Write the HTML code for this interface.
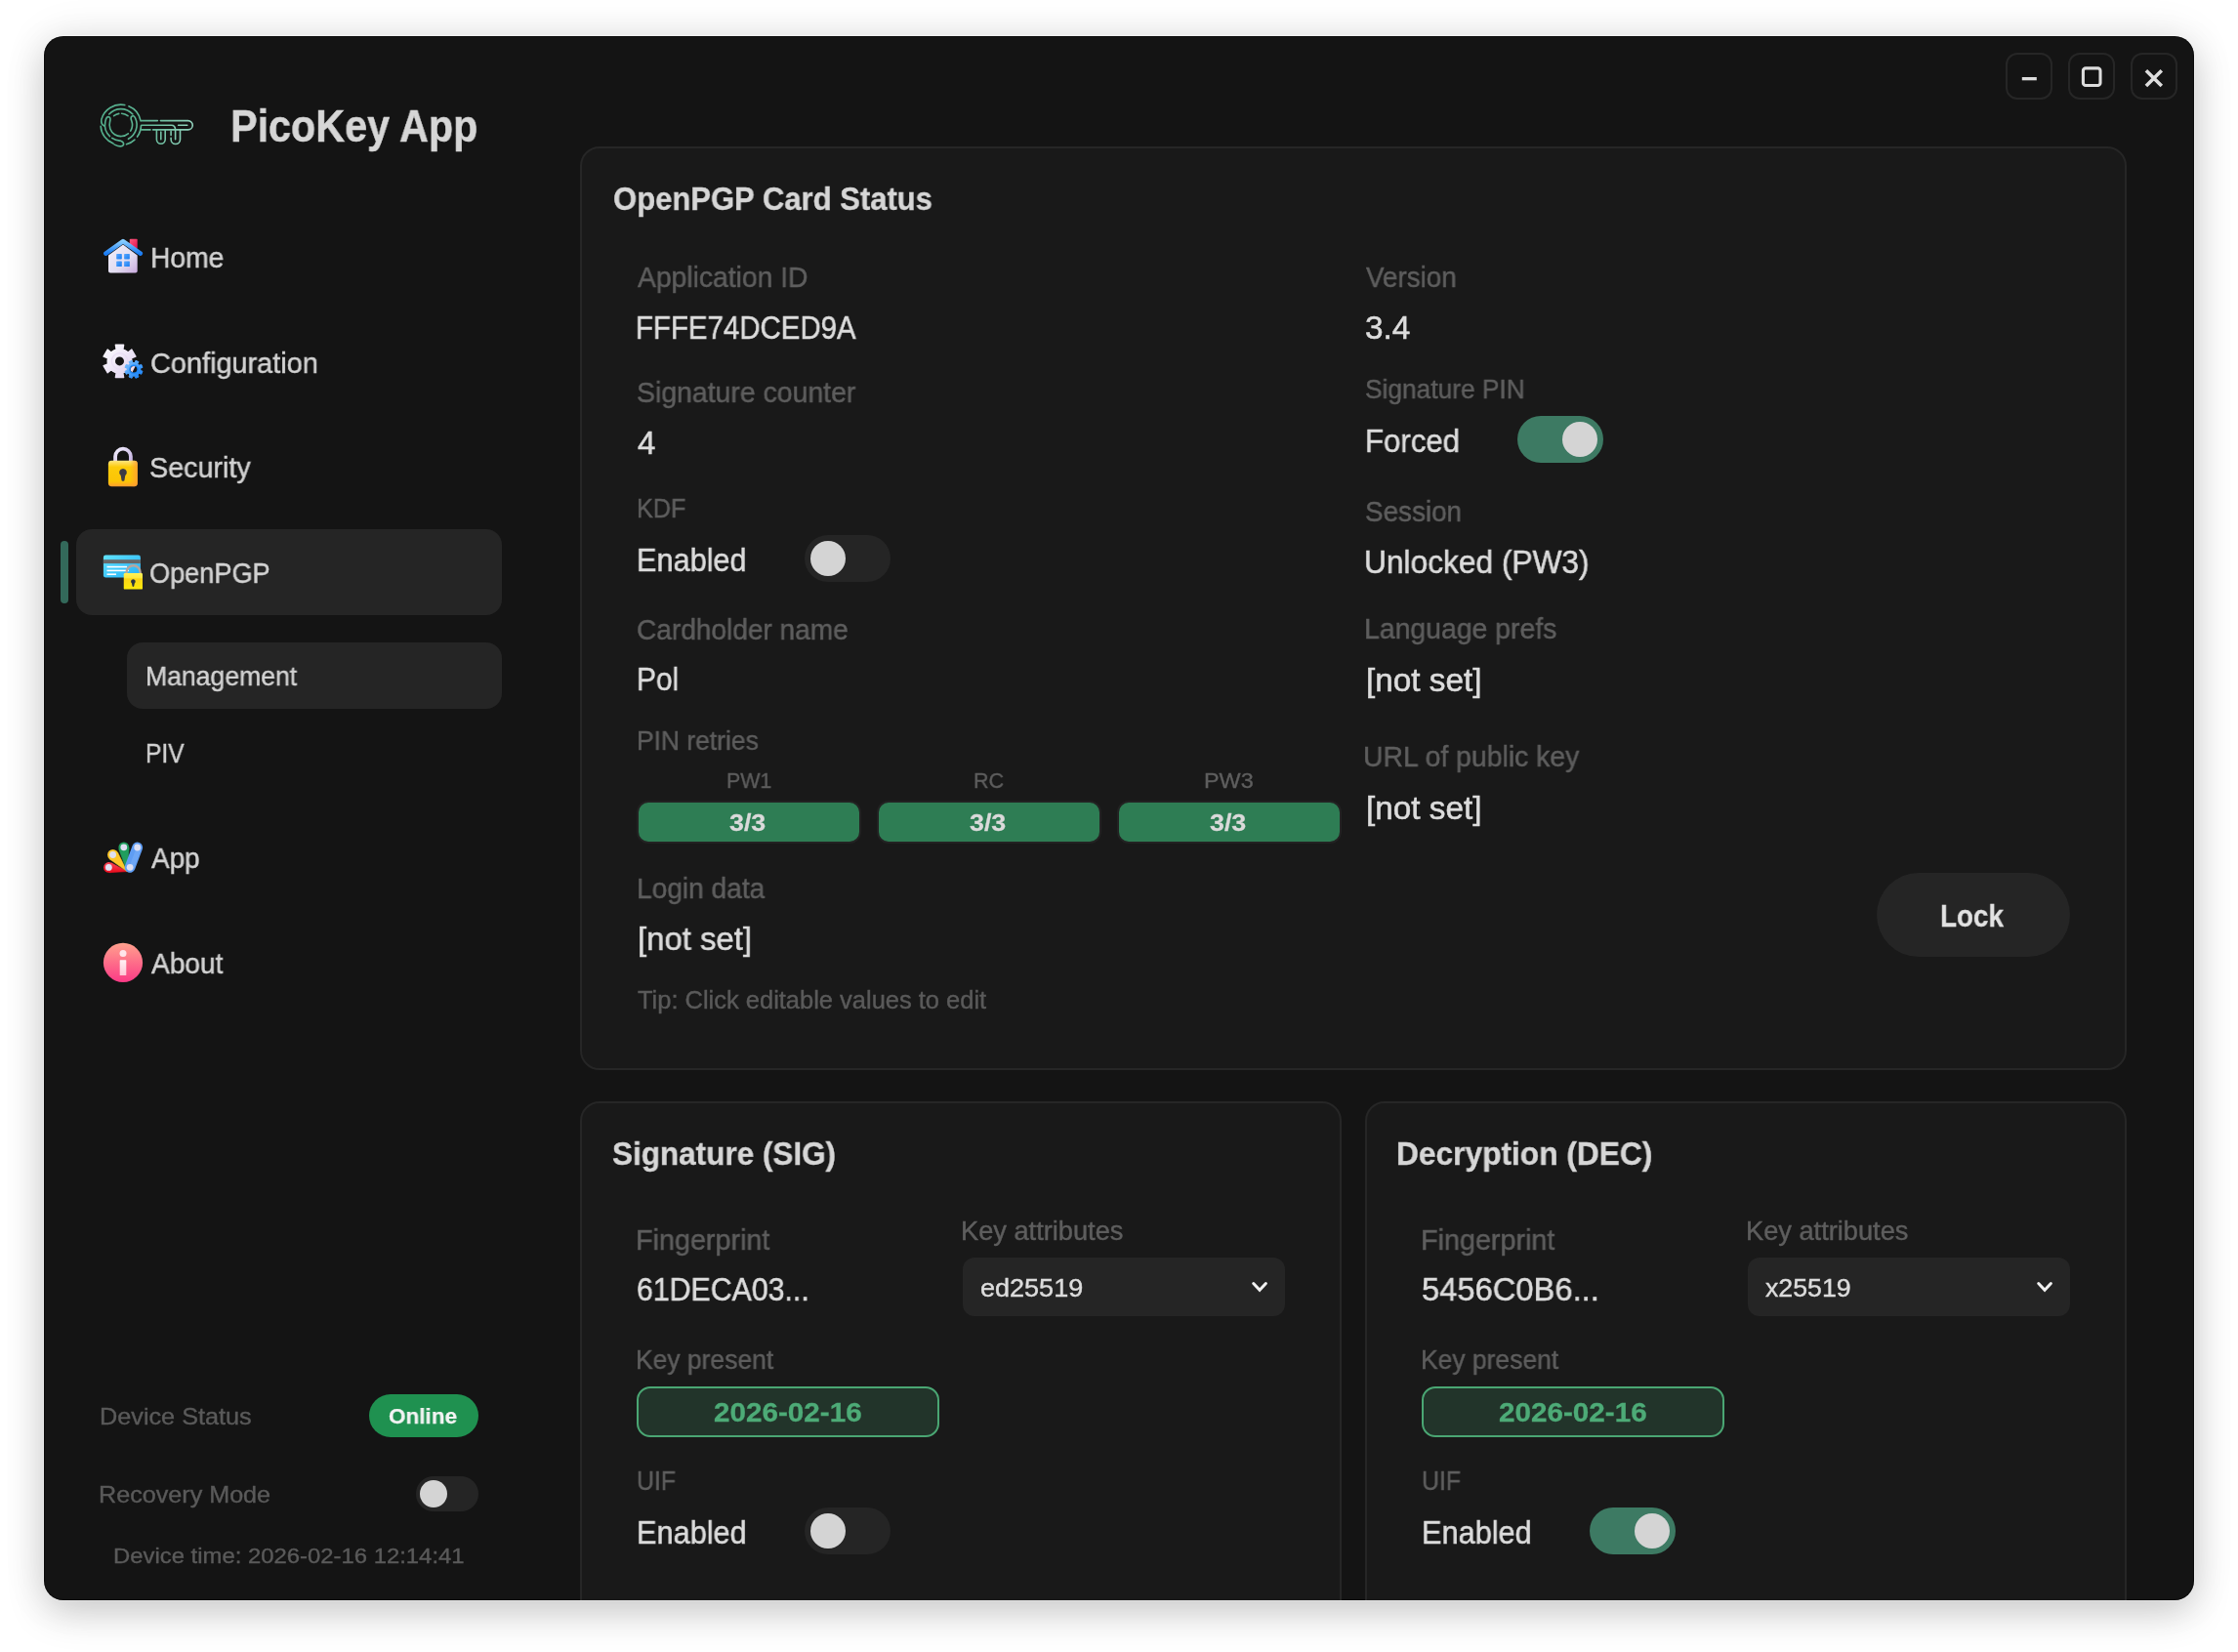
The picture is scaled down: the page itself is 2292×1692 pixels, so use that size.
<!DOCTYPE html>
<html><head><meta charset="utf-8"><title>PicoKey App</title>
<style>
html,body{margin:0;padding:0;}
body{width:2292px;height:1692px;background:#ffffff;overflow:hidden;position:relative;font-family:"Liberation Sans",sans-serif;}
#win{position:absolute;left:45px;top:37px;width:2202px;height:1602px;border-radius:20px;background:#141414;overflow:hidden;box-shadow:inset 0 0 0 1px rgba(0,0,0,0.4);}
#shadow{position:absolute;left:45px;top:37px;width:2202px;height:1602px;border-radius:20px;box-shadow:0 0 0 1px rgba(255,255,255,0.28),0 14px 38px rgba(0,0,0,0.17),0 0 46px rgba(0,0,0,0.09);}
.b{position:absolute;}
.t{position:absolute;white-space:pre;transform-origin:0 50%;will-change:transform;}
#icons{position:absolute;left:0;top:0;width:2202px;height:1602px;}
</style></head>
<body>
<div id="shadow"></div>
<div id="win">
<div class="b" style="left:17.00px;top:517.00px;width:8.00px;height:64.00px;background:#33695a;border-radius:4px;"></div>
<div class="b" style="left:33.00px;top:505.00px;width:435.50px;height:88.00px;background:#252525;border-radius:16px;"></div>
<div class="b" style="left:85.00px;top:621.00px;width:383.50px;height:68.00px;background:#252525;border-radius:16px;"></div>
<div class="b" style="left:333.00px;top:1391.00px;width:112.00px;height:44.00px;background:#1f9150;border-radius:22px;"></div>
<div class="b" style="left:381.00px;top:1475.00px;width:64.00px;height:36.00px;background:#252525;border-radius:18.0px;"><div class="b" style="left:4.00px;top:4.00px;width:28px;height:28px;border-radius:50%;background:#d4d4d4;"></div></div>
<div class="b" style="left:2009.00px;top:17.00px;width:48.00px;height:48.00px;border:2px solid #262626;border-radius:12px;box-sizing:border-box;"></div>
<div class="b" style="left:2073.00px;top:17.00px;width:48.00px;height:48.00px;border:2px solid #262626;border-radius:12px;box-sizing:border-box;"></div>
<div class="b" style="left:2137.00px;top:17.00px;width:48.00px;height:48.00px;border:2px solid #262626;border-radius:12px;box-sizing:border-box;"></div>
<div class="b" style="left:549.00px;top:113.00px;width:1584.00px;height:946.00px;background:#191919;border:2px solid #262626;border-radius:20px;box-sizing:border-box;"></div>
<div class="b" style="left:549.00px;top:1091.00px;width:780.00px;height:700.00px;background:#191919;border:2px solid #262626;border-radius:20px;box-sizing:border-box;"></div>
<div class="b" style="left:1353.00px;top:1091.00px;width:780.00px;height:700.00px;background:#191919;border:2px solid #262626;border-radius:20px;box-sizing:border-box;"></div>
<div class="b" style="left:779.00px;top:511.00px;width:88.00px;height:48.00px;background:#252525;border-radius:24.0px;"><div class="b" style="left:6.00px;top:6.00px;width:36px;height:36px;border-radius:50%;background:#d4d4d4;"></div></div>
<div class="b" style="left:1509.00px;top:389.00px;width:88.00px;height:48.00px;background:#3d7a63;border-radius:24.0px;"><div class="b" style="left:46.00px;top:6.00px;width:36px;height:36px;border-radius:50%;background:#d4d4d4;"></div></div>
<div class="b" style="left:607.00px;top:783.00px;width:230.00px;height:44.00px;background:#2e7d54;border:2px solid #222222;border-radius:12px;box-sizing:border-box;"></div>
<div class="b" style="left:853.00px;top:783.00px;width:230.00px;height:44.00px;background:#2e7d54;border:2px solid #222222;border-radius:12px;box-sizing:border-box;"></div>
<div class="b" style="left:1099.00px;top:783.00px;width:230.00px;height:44.00px;background:#2e7d54;border:2px solid #222222;border-radius:12px;box-sizing:border-box;"></div>
<div class="b" style="left:1877.00px;top:857.00px;width:198.00px;height:86.00px;background:#252525;border-radius:43px;"></div>
<div class="b" style="left:941.00px;top:1251.00px;width:330.00px;height:60.00px;background:#252525;border-radius:12px;"></div>
<div class="b" style="left:607.00px;top:1383.00px;width:310.00px;height:52.00px;background:#22342a;border:2px solid #4aa673;border-radius:14px;box-sizing:border-box;"></div>
<div class="b" style="left:779.00px;top:1507.00px;width:88.00px;height:48.00px;background:#252525;border-radius:24.0px;"><div class="b" style="left:6.00px;top:6.00px;width:36px;height:36px;border-radius:50%;background:#d4d4d4;"></div></div>
<div class="b" style="left:1745.00px;top:1251.00px;width:330.00px;height:60.00px;background:#252525;border-radius:12px;"></div>
<div class="b" style="left:1411.00px;top:1383.00px;width:310.00px;height:52.00px;background:#22342a;border:2px solid #4aa673;border-radius:14px;box-sizing:border-box;"></div>
<div class="b" style="left:1583.00px;top:1507.00px;width:88.00px;height:48.00px;background:#3d7a63;border-radius:24.0px;"><div class="b" style="left:46.00px;top:6.00px;width:36px;height:36px;border-radius:50%;background:#d4d4d4;"></div></div>
<svg id="icons" viewBox="45 37 2202 1602">
<defs>
<linearGradient id="gLogo" gradientUnits="userSpaceOnUse" x1="102" y1="0" x2="198" y2="0"><stop offset="0" stop-color="#52ad8a"/><stop offset="0.45" stop-color="#5db493"/><stop offset="1" stop-color="#94d5bf"/></linearGradient>
<linearGradient id="gRoof" x1="0" y1="0" x2="0" y2="1"><stop offset="0" stop-color="#86ccff"/><stop offset="1" stop-color="#1b7cf2"/></linearGradient>
<linearGradient id="gWall" x1="0" y1="0" x2="1" y2="1"><stop offset="0" stop-color="#f2f0fb"/><stop offset="0.6" stop-color="#e2dcf0"/><stop offset="1" stop-color="#c9a9dd"/></linearGradient>
<linearGradient id="gChim" x1="0" y1="0" x2="1" y2="1"><stop offset="0" stop-color="#ff5a7e"/><stop offset="1" stop-color="#e0104e"/></linearGradient>
<linearGradient id="gWin" x1="0" y1="0" x2="1" y2="1"><stop offset="0" stop-color="#5aa8ff"/><stop offset="1" stop-color="#167bf0"/></linearGradient>
<linearGradient id="gGear" x1="0" y1="0" x2="1" y2="1"><stop offset="0" stop-color="#fbfaff"/><stop offset="1" stop-color="#e0d2ee"/></linearGradient>
<linearGradient id="gGearB" x1="0" y1="0" x2="1" y2="1"><stop offset="0" stop-color="#7cc0ff"/><stop offset="1" stop-color="#1680f6"/></linearGradient>
<linearGradient id="gLock" x1="0" y1="0" x2="0" y2="1"><stop offset="0" stop-color="#ffe680"/><stop offset="0.25" stop-color="#fccb0a"/><stop offset="0.8" stop-color="#fbc506"/><stop offset="1" stop-color="#ff9d30"/></linearGradient>
<linearGradient id="gLockR" x1="0" y1="0" x2="1" y2="0"><stop offset="0.75" stop-color="#ff9d30" stop-opacity="0"/><stop offset="1" stop-color="#ff9d30" stop-opacity="0.9"/></linearGradient>
<linearGradient id="gShack" x1="0" y1="0" x2="1" y2="1"><stop offset="0" stop-color="#f0ecfb"/><stop offset="1" stop-color="#c4b0e2"/></linearGradient>
<linearGradient id="gCard" x1="0" y1="0" x2="1" y2="1"><stop offset="0" stop-color="#62e4ff"/><stop offset="1" stop-color="#22aef6"/></linearGradient>
<linearGradient id="gLock2" x1="0" y1="0" x2="0" y2="1"><stop offset="0" stop-color="#fff25a"/><stop offset="0.3" stop-color="#fde83c"/><stop offset="0.35" stop-color="#fbd417"/><stop offset="1" stop-color="#fdea0a"/></linearGradient>
<linearGradient id="gAbout" x1="0" y1="0" x2="0" y2="1"><stop offset="0" stop-color="#ffa18d"/><stop offset="1" stop-color="#fc3a86"/></linearGradient>
<linearGradient id="gAboutI" x1="0" y1="0" x2="0" y2="1"><stop offset="0" stop-color="#fff2f5"/><stop offset="1" stop-color="#ffc6d6"/></linearGradient>
<linearGradient id="gRed" x1="0" y1="0" x2="0" y2="1"><stop offset="0" stop-color="#fa4556"/><stop offset="1" stop-color="#ea0b1c"/></linearGradient>
</defs>
<path d="M103.90 122.19A20.7 20.7 0 0 1 127.75 107.58M131.89 108.85A20.7 20.7 0 0 1 144.12 123.95M144.49 128.62A20.7 20.7 0 0 1 140.55 140.07M137.92 143.04A20.7 20.7 0 0 1 129.51 147.80M116.05 147.09A20.7 20.7 0 0 1 103.15 129.34M117.30 148.10 Q124.30 151.50 126.40 148.50 Q127.40 145.90 123.60 144.20M111.69 116.99A16.3 16.3 0 0 1 135.91 116.99M138.57 121.01A16.3 16.3 0 0 1 131.45 142.29M122.66 144.16A16.3 16.3 0 0 1 114.69 141.41M112.48 139.63A16.3 16.3 0 0 1 107.86 124.51M103.90 122.20 Q103.00 127.40 106.80 129.10M107.90 124.50 Q108.80 118.60 112.00 119.90 Q113.60 120.90 112.60 124.70M131.32 136.86A11.7 11.7 0 0 1 112.55 124.68M134.93 124.28A11.7 11.7 0 0 1 133.72 134.10M116.60 118.68A11.7 11.7 0 0 1 121.77 116.38M124.62 116.23A11.7 11.7 0 0 1 131.00 118.68M138.60 121.00 Q136.80 117.50 134.70 119.30 Q133.40 120.90 134.90 124.30M145.2 123.6H161.4M164.4 123.6H192.6A4.65 4.65 0 0 1 192.6 132.9H156.6M145.2 132.9H154M145.2 128.25H175.4Q179.6 128.25 179.6 133.3V142.7M182.6 128.25H191.8M160.4 132.9V142.8A4.4 4.4 0 0 0 169.2 142.8V132.9M164.8 135V142.7M175.1 134.6V138.4M175.1 141.2V142.8A4.7 4.7 0 0 0 184.5 142.8V132.9" fill="none" stroke="url(#gLogo)" stroke-width="1.6" stroke-linecap="round" stroke-linejoin="round"/>
<g><rect x="132.8" y="244.8" width="7.9" height="10" rx="0.8" fill="url(#gChim)"/><path d="M111 261.5L126 250.6L140.7 261.5V277.6Q140.7 279.6 138.7 279.6H113Q111 279.6 111 277.6Z" fill="url(#gWall)"/><path d="M108.4 259.6L126 247.2L143.8 259.6" fill="none" stroke="url(#gRoof)" stroke-width="4.6" stroke-linecap="round" stroke-linejoin="round"/><rect x="119.2" y="260" width="5.6" height="5.4" rx="0.6" fill="url(#gWin)"/><rect x="127.1" y="260" width="5.7" height="5.4" rx="0.6" fill="url(#gWin)"/><rect x="119.2" y="267.6" width="5.6" height="5.4" rx="0.6" fill="url(#gWin)"/><rect x="127.1" y="267.6" width="5.7" height="5.4" rx="0.6" fill="url(#gWin)"/></g>
<path d="M119.19 357.95L118.38 353.30L126.62 353.30L125.81 357.95L131.19 361.06L134.81 358.03L138.93 365.17L134.51 366.80L134.51 373.00L138.93 374.63L134.81 381.77L131.19 378.74L125.81 381.85L126.62 386.50L118.38 386.50L119.19 381.85L113.81 378.74L110.19 381.77L106.07 374.63L110.49 373.00L110.49 366.80L106.07 365.17L110.19 358.03L113.81 361.06Z" fill="url(#gGear)" stroke="url(#gGear)" stroke-width="1.4" stroke-linejoin="round"/>
<circle cx="122.5" cy="369.9" r="12.9" fill="url(#gGear)"/>
<circle cx="122.5" cy="369.9" r="8.2" fill="none" stroke="#e6daf2" stroke-width="1.2" opacity="0.8"/>
<circle cx="122.5" cy="369.9" r="4.5" fill="#141414"/>
<path d="M138.14 371.49L138.93 369.30L142.00 370.58L141.01 372.68L142.62 374.29L144.72 373.30L146.00 376.37L143.81 377.16L143.81 379.44L146.00 380.23L144.72 383.30L142.62 382.31L141.01 383.92L142.00 386.02L138.93 387.30L138.14 385.11L135.86 385.11L135.07 387.30L132.00 386.02L132.99 383.92L131.38 382.31L129.28 383.30L128.00 380.23L130.19 379.44L130.19 377.16L128.00 376.37L129.28 373.30L131.38 374.29L132.99 372.68L132.00 370.58L135.07 369.30L135.86 371.49Z" fill="url(#gGearB)" stroke="url(#gGearB)" stroke-width="1" stroke-linejoin="round"/>
<circle cx="137.0" cy="378.3" r="6.9" fill="url(#gGearB)"/>
<circle cx="137.0" cy="378.3" r="4.8" fill="#1d88f8"/>
<circle cx="137.0" cy="378.3" r="3.3" fill="#141414"/>
<path d="M133.7 378.3A3.3 3.3 0 0 1 138.50 375.36L135.50 381.24A3.3 3.3 0 0 1 133.7 378.3Z" fill="#f2dcec"/>
<path d="M118.1 474V467.6A7.9 7.9 0 0 1 133.9 467.6V474" fill="none" stroke="url(#gShack)" stroke-width="3.8"/><rect x="110.9" y="471.8" width="29.9" height="26.4" rx="3.4" fill="url(#gLock)"/><rect x="110.9" y="471.8" width="29.9" height="26.4" rx="3.4" fill="url(#gLockR)"/><path d="M126 479.9A3.9 3.9 0 0 1 128.3 486.9L127.4 492.2Q126 493.4 124.6 492.2L123.7 486.9A3.9 3.9 0 0 1 126 479.9Z" fill="#3b3b44"/>
<rect x="105.9" y="568.5" width="38" height="23.1" rx="2.4" fill="url(#gCard)"/><rect x="105.9" y="573.2" width="38" height="3.9" fill="#686868"/><rect x="109.5" y="579.8" width="20.6" height="1.6" fill="#fff"/><rect x="109.5" y="583.6" width="22.4" height="1.6" fill="#fff"/><rect x="109.5" y="587.4" width="9.5" height="1.6" fill="#fff"/><path d="M129.5 588V586.4A7.1 7.1 0 0 1 143.7 586.4V588" fill="none" stroke="#b5a69f" stroke-width="2.4"/><rect x="126.75" y="587" width="19.25" height="16.6" rx="1.2" fill="url(#gLock2)"/><path d="M136.4 593.2A2.4 2.4 0 0 1 137.8 597.5L137.2 600.6Q136.4 601.4 135.6 600.6L135 597.5A2.4 2.4 0 0 1 136.4 593.2Z" fill="#2b3540"/>
<path d="M130.20 892.60L113.93 883.75L111.71 893.69Z" fill="url(#gRed)" stroke="url(#gRed)" stroke-width="0.6" stroke-linejoin="round"/><circle cx="111.4" cy="888.4" r="5.3" fill="url(#gRed)"/>
<path d="M130.20 892.60L120.53 873.06L112.42 879.99Z" fill="#fcc72a" stroke="#fcc72a" stroke-width="0.6" stroke-linejoin="round"/><circle cx="115.6" cy="875.5" r="5.5" fill="#fcc72a"/>
<path d="M130.20 892.60L132.18 868.24L121.73 869.67Z" fill="#219e5e" stroke="#219e5e" stroke-width="0.6" stroke-linejoin="round"/><circle cx="126.8" cy="867.8" r="5.4" fill="#219e5e"/>
<path d="M133.1 888.35L140.7 868" fill="none" stroke="#5f9df4" stroke-width="10.8" stroke-linecap="round"/>
<path d="M134.6 888.9L142.2 868.5" fill="none" stroke="#78adf6" stroke-width="5" stroke-linecap="round" opacity="0.6"/>
<circle cx="111.4" cy="888.4" r="3.4" fill="#dfe0f2"/>
<circle cx="115.6" cy="875.5" r="3.4" fill="#dfe0f2"/>
<circle cx="126.8" cy="867.8" r="3.4" fill="#dfe0f2"/>
<circle cx="140.7" cy="868" r="3.4" fill="#dfe0f2"/>
<circle cx="133.1" cy="888.35" r="3.4" fill="#dfe0f2"/>
<circle cx="126" cy="985.9" r="20.1" fill="url(#gAbout)"/><circle cx="126" cy="976.5" r="3.5" fill="#ffe4ea"/><rect x="122.7" y="983.2" width="6.6" height="15.8" rx="0.6" fill="url(#gAboutI)"/>
<rect x="2070.8" y="79" width="15" height="3.3" fill="#dddddd"/>
<rect x="2133.4" y="69.9" width="17.6" height="17.6" rx="2.6" fill="none" stroke="#dddddd" stroke-width="3.1"/>
<path d="M2197.9 72.2L2213.8 88M2213.8 72.2L2197.9 88" stroke="#dddddd" stroke-width="3.6" fill="none"/>
<path d="M1283.7 1314.5L1290.05 1321.2L1296.4 1314.5" fill="none" stroke="#f2f2f2" stroke-width="3" stroke-linecap="round" stroke-linejoin="miter"/>
<path d="M2087.7 1314.5L2094.05 1321.2L2100.4 1314.5" fill="none" stroke="#f2f2f2" stroke-width="3" stroke-linecap="round" stroke-linejoin="miter"/>
</svg>
<span class="t" id="title" style="left:191.30px;top:64.43px;font-size:46.38px;line-height:56px;color:#d6d6d6;transform:scaleX(0.8908);font-weight:700;-webkit-text-stroke:0.51px currentColor;">PicoKey App</span>
<span class="t" id="home" style="left:108.50px;top:208.67px;font-size:29.54px;line-height:35px;color:#d2d2d2;transform:scaleX(0.9571);-webkit-text-stroke:0.47px currentColor;">Home</span>
<span class="t" id="config" style="left:108.90px;top:317.07px;font-size:29.54px;line-height:35px;color:#d2d2d2;transform:scaleX(0.9783);-webkit-text-stroke:0.47px currentColor;">Configuration</span>
<span class="t" id="security" style="left:108.00px;top:424.66px;font-size:29.12px;line-height:35px;color:#d2d2d2;transform:scaleX(0.9865);-webkit-text-stroke:0.47px currentColor;">Security</span>
<span class="t" id="openpgp" style="left:108.00px;top:532.91px;font-size:29.12px;line-height:35px;color:#d2d2d2;transform:scaleX(0.9315);-webkit-text-stroke:0.47px currentColor;">OpenPGP</span>
<span class="t" id="mgmt" style="left:104.00px;top:640.13px;font-size:27.04px;line-height:32px;color:#d2d2d2;transform:scaleX(0.9832);-webkit-text-stroke:0.43px currentColor;">Management</span>
<span class="t" id="piv" style="left:104.00px;top:719.38px;font-size:27.04px;line-height:32px;color:#d2d2d2;transform:scaleX(0.9095);-webkit-text-stroke:0.43px currentColor;">PIV</span>
<span class="t" id="app" style="left:110.00px;top:824.66px;font-size:29.12px;line-height:35px;color:#d2d2d2;transform:scaleX(0.9577);-webkit-text-stroke:0.47px currentColor;">App</span>
<span class="t" id="about" style="left:110.00px;top:932.91px;font-size:29.12px;line-height:35px;color:#d2d2d2;transform:scaleX(0.9650);-webkit-text-stroke:0.47px currentColor;">About</span>
<span class="t" id="devstatus" style="left:56.80px;top:1399.03px;font-size:24.44px;line-height:29px;color:#5a5a5a;transform:scaleX(1.0328);-webkit-text-stroke:0.39px currentColor;">Device Status</span>
<span class="t" id="online" style="left:353.00px;top:1399.57px;font-size:22.88px;line-height:27px;color:#f4f4f4;transform:scaleX(0.9841);font-weight:700;-webkit-text-stroke:0.25px currentColor;">Online</span>
<span class="t" id="recovery" style="left:56.40px;top:1478.73px;font-size:24.44px;line-height:29px;color:#5a5a5a;transform:scaleX(1.0289);-webkit-text-stroke:0.39px currentColor;">Recovery Mode</span>
<span class="t" id="devtime" style="left:71.00px;top:1543.07px;font-size:22.88px;line-height:27px;color:#5a5a5a;transform:scaleX(1.0434);-webkit-text-stroke:0.37px currentColor;">Device time: 2026-02-16 12:14:41</span>
<span class="t" id="c1title" style="left:583.00px;top:147.37px;font-size:33.28px;line-height:40px;color:#d6d6d6;transform:scaleX(0.9325);font-weight:700;-webkit-text-stroke:0.37px currentColor;">OpenPGP Card Status</span>
<span class="t" id="appid_l" style="left:607.80px;top:229.91px;font-size:29.12px;line-height:35px;color:#5e5e5e;transform:scaleX(0.9713);-webkit-text-stroke:0.47px currentColor;">Application ID</span>
<span class="t" id="appid_v" style="left:606.40px;top:278.87px;font-size:33.28px;line-height:40px;color:#dcdcdc;transform:scaleX(0.8840);-webkit-text-stroke:0.53px currentColor;">FFFE74DCED9A</span>
<span class="t" id="sigc_l" style="left:606.80px;top:348.31px;font-size:29.12px;line-height:35px;color:#5e5e5e;transform:scaleX(0.9761);-webkit-text-stroke:0.47px currentColor;">Signature counter</span>
<span class="t" id="sigc_v" style="left:607.80px;top:396.57px;font-size:33.28px;line-height:40px;color:#dcdcdc;transform:scaleX(0.9895);-webkit-text-stroke:0.53px currentColor;">4</span>
<span class="t" id="kdf_l" style="left:606.70px;top:467.93px;font-size:27.04px;line-height:32px;color:#5e5e5e;transform:scaleX(0.9330);-webkit-text-stroke:0.43px currentColor;">KDF</span>
<span class="t" id="kdf_v" style="left:607.00px;top:517.17px;font-size:33.28px;line-height:40px;color:#dcdcdc;transform:scaleX(0.9224);-webkit-text-stroke:0.53px currentColor;">Enabled</span>
<span class="t" id="ch_l" style="left:607.20px;top:590.91px;font-size:29.12px;line-height:35px;color:#5e5e5e;transform:scaleX(0.9637);-webkit-text-stroke:0.47px currentColor;">Cardholder name</span>
<span class="t" id="ch_v" style="left:607.30px;top:638.97px;font-size:33.28px;line-height:40px;color:#dcdcdc;transform:scaleX(0.8962);-webkit-text-stroke:0.53px currentColor;">Pol</span>
<span class="t" id="pin_l" style="left:606.60px;top:705.93px;font-size:27.04px;line-height:32px;color:#5e5e5e;transform:scaleX(0.9779);-webkit-text-stroke:0.43px currentColor;">PIN retries</span>
<span class="t" id="pw1" style="left:698.90px;top:749.07px;font-size:22.88px;line-height:27px;color:#5e5e5e;transform:scaleX(0.9344);-webkit-text-stroke:0.37px currentColor;">PW1</span>
<span class="t" id="rc" style="left:951.70px;top:749.07px;font-size:22.88px;line-height:27px;color:#5e5e5e;transform:scaleX(0.9417);-webkit-text-stroke:0.37px currentColor;">RC</span>
<span class="t" id="pw3" style="left:1187.80px;top:749.07px;font-size:22.88px;line-height:27px;color:#5e5e5e;transform:scaleX(1.0217);-webkit-text-stroke:0.37px currentColor;">PW3</span>
<span class="t" id="b1" style="left:702.00px;top:791.30px;font-size:24.54px;line-height:29px;color:#dadada;transform:scaleX(1.0924);font-weight:700;-webkit-text-stroke:0.27px currentColor;">3/3</span>
<span class="t" id="b2" style="left:948.00px;top:791.30px;font-size:24.54px;line-height:29px;color:#dadada;transform:scaleX(1.0924);font-weight:700;-webkit-text-stroke:0.27px currentColor;">3/3</span>
<span class="t" id="b3" style="left:1194.00px;top:791.30px;font-size:24.54px;line-height:29px;color:#dadada;transform:scaleX(1.0924);font-weight:700;-webkit-text-stroke:0.27px currentColor;">3/3</span>
<span class="t" id="login_l" style="left:606.60px;top:855.71px;font-size:29.12px;line-height:35px;color:#5e5e5e;transform:scaleX(0.9651);-webkit-text-stroke:0.47px currentColor;">Login data</span>
<span class="t" id="login_v" style="left:608.30px;top:904.57px;font-size:33.28px;line-height:40px;color:#dcdcdc;transform:scaleX(0.9894);-webkit-text-stroke:0.53px currentColor;">[not set]</span>
<span class="t" id="tip" style="left:608.00px;top:971.65px;font-size:24.96px;line-height:30px;color:#5a5a5a;transform:scaleX(1.0204);-webkit-text-stroke:0.40px currentColor;">Tip: Click editable values to edit</span>
<span class="t" id="ver_l" style="left:1354.20px;top:229.91px;font-size:29.12px;line-height:35px;color:#5e5e5e;transform:scaleX(0.9538);-webkit-text-stroke:0.47px currentColor;">Version</span>
<span class="t" id="ver_v" style="left:1353.20px;top:278.77px;font-size:33.28px;line-height:40px;color:#dcdcdc;transform:scaleX(1.0024);-webkit-text-stroke:0.53px currentColor;">3.4</span>
<span class="t" id="spin_l" style="left:1353.30px;top:346.03px;font-size:27.04px;line-height:32px;color:#5e5e5e;transform:scaleX(0.9728);-webkit-text-stroke:0.43px currentColor;">Signature PIN</span>
<span class="t" id="spin_v" style="left:1352.50px;top:394.67px;font-size:33.28px;line-height:40px;color:#dcdcdc;transform:scaleX(0.9365);-webkit-text-stroke:0.53px currentColor;">Forced</span>
<span class="t" id="sess_l" style="left:1353.20px;top:469.61px;font-size:29.12px;line-height:35px;color:#5e5e5e;transform:scaleX(0.9563);-webkit-text-stroke:0.47px currentColor;">Session</span>
<span class="t" id="sess_v" style="left:1352.20px;top:518.97px;font-size:33.28px;line-height:40px;color:#dcdcdc;transform:scaleX(0.9521);-webkit-text-stroke:0.53px currentColor;">Unlocked (PW3)</span>
<span class="t" id="lang_l" style="left:1352.20px;top:589.71px;font-size:29.12px;line-height:35px;color:#5e5e5e;transform:scaleX(0.9756);-webkit-text-stroke:0.47px currentColor;">Language prefs</span>
<span class="t" id="lang_v" style="left:1353.60px;top:639.97px;font-size:33.28px;line-height:40px;color:#dcdcdc;transform:scaleX(1.0005);-webkit-text-stroke:0.53px currentColor;">[not set]</span>
<span class="t" id="url_l" style="left:1351.20px;top:720.91px;font-size:29.12px;line-height:35px;color:#5e5e5e;transform:scaleX(0.9747);-webkit-text-stroke:0.47px currentColor;">URL of public key</span>
<span class="t" id="url_v" style="left:1353.60px;top:771.37px;font-size:33.28px;line-height:40px;color:#dcdcdc;transform:scaleX(1.0005);-webkit-text-stroke:0.53px currentColor;">[not set]</span>
<span class="t" id="lock" style="left:1941.80px;top:882.59px;font-size:31.20px;line-height:37px;color:#e2e2e2;transform:scaleX(0.8912);font-weight:700;-webkit-text-stroke:0.34px currentColor;">Lock</span>
<span class="t" id="stitle" style="left:582.20px;top:1125.47px;font-size:33.28px;line-height:40px;color:#d6d6d6;transform:scaleX(0.9458);font-weight:700;-webkit-text-stroke:0.37px currentColor;">Signature (SIG)</span>
<span class="t" id="sfp_l" style="left:606.00px;top:1215.61px;font-size:29.12px;line-height:35px;color:#5e5e5e;transform:scaleX(0.9874);-webkit-text-stroke:0.47px currentColor;">Fingerprint</span>
<span class="t" id="sfp_v" style="left:607.00px;top:1264.47px;font-size:33.28px;line-height:40px;color:#dcdcdc;transform:scaleX(0.9099);-webkit-text-stroke:0.53px currentColor;">61DECA03...</span>
<span class="t" id="ska_l" style="left:939.20px;top:1208.13px;font-size:27.04px;line-height:32px;color:#5e5e5e;transform:scaleX(1.0068);-webkit-text-stroke:0.43px currentColor;">Key attributes</span>
<span class="t" id="salg" style="left:958.60px;top:1266.87px;font-size:25.48px;line-height:31px;color:#dcdcdc;transform:scaleX(1.0610);-webkit-text-stroke:0.41px currentColor;">ed25519</span>
<span class="t" id="skp_l" style="left:606.00px;top:1340.43px;font-size:27.04px;line-height:32px;color:#5e5e5e;transform:scaleX(0.9786);-webkit-text-stroke:0.43px currentColor;">Key present</span>
<span class="t" id="sdate" style="left:685.90px;top:1393.36px;font-size:27.25px;line-height:33px;color:#4dab77;transform:scaleX(1.0882);font-weight:700;-webkit-text-stroke:0.30px currentColor;">2026-02-16</span>
<span class="t" id="suif_l" style="left:606.80px;top:1464.13px;font-size:27.04px;line-height:32px;color:#5e5e5e;transform:scaleX(0.9191);-webkit-text-stroke:0.43px currentColor;">UIF</span>
<span class="t" id="suif_v" style="left:607.10px;top:1512.77px;font-size:33.28px;line-height:40px;color:#dcdcdc;transform:scaleX(0.9234);-webkit-text-stroke:0.53px currentColor;">Enabled</span>
<span class="t" id="dtitle" style="left:1385.20px;top:1125.47px;font-size:33.28px;line-height:40px;color:#d6d6d6;transform:scaleX(0.9527);font-weight:700;-webkit-text-stroke:0.37px currentColor;">Decryption (DEC)</span>
<span class="t" id="dfp_l" style="left:1410.00px;top:1215.61px;font-size:29.12px;line-height:35px;color:#5e5e5e;transform:scaleX(0.9874);-webkit-text-stroke:0.47px currentColor;">Fingerprint</span>
<span class="t" id="dfp_v" style="left:1411.00px;top:1264.47px;font-size:33.28px;line-height:40px;color:#dcdcdc;transform:scaleX(0.9829);-webkit-text-stroke:0.53px currentColor;">5456C0B6...</span>
<span class="t" id="dka_l" style="left:1743.20px;top:1208.13px;font-size:27.04px;line-height:32px;color:#5e5e5e;transform:scaleX(1.0068);-webkit-text-stroke:0.43px currentColor;">Key attributes</span>
<span class="t" id="dalg" style="left:1763.00px;top:1266.87px;font-size:25.48px;line-height:31px;color:#dcdcdc;transform:scaleX(1.0486);-webkit-text-stroke:0.41px currentColor;">x25519</span>
<span class="t" id="dkp_l" style="left:1410.00px;top:1340.43px;font-size:27.04px;line-height:32px;color:#5e5e5e;transform:scaleX(0.9786);-webkit-text-stroke:0.43px currentColor;">Key present</span>
<span class="t" id="ddate" style="left:1489.90px;top:1393.36px;font-size:27.25px;line-height:33px;color:#4dab77;transform:scaleX(1.0882);font-weight:700;-webkit-text-stroke:0.30px currentColor;">2026-02-16</span>
<span class="t" id="duif_l" style="left:1410.80px;top:1464.13px;font-size:27.04px;line-height:32px;color:#5e5e5e;transform:scaleX(0.9191);-webkit-text-stroke:0.43px currentColor;">UIF</span>
<span class="t" id="duif_v" style="left:1411.10px;top:1512.77px;font-size:33.28px;line-height:40px;color:#dcdcdc;transform:scaleX(0.9234);-webkit-text-stroke:0.53px currentColor;">Enabled</span>
</div>
</body></html>
